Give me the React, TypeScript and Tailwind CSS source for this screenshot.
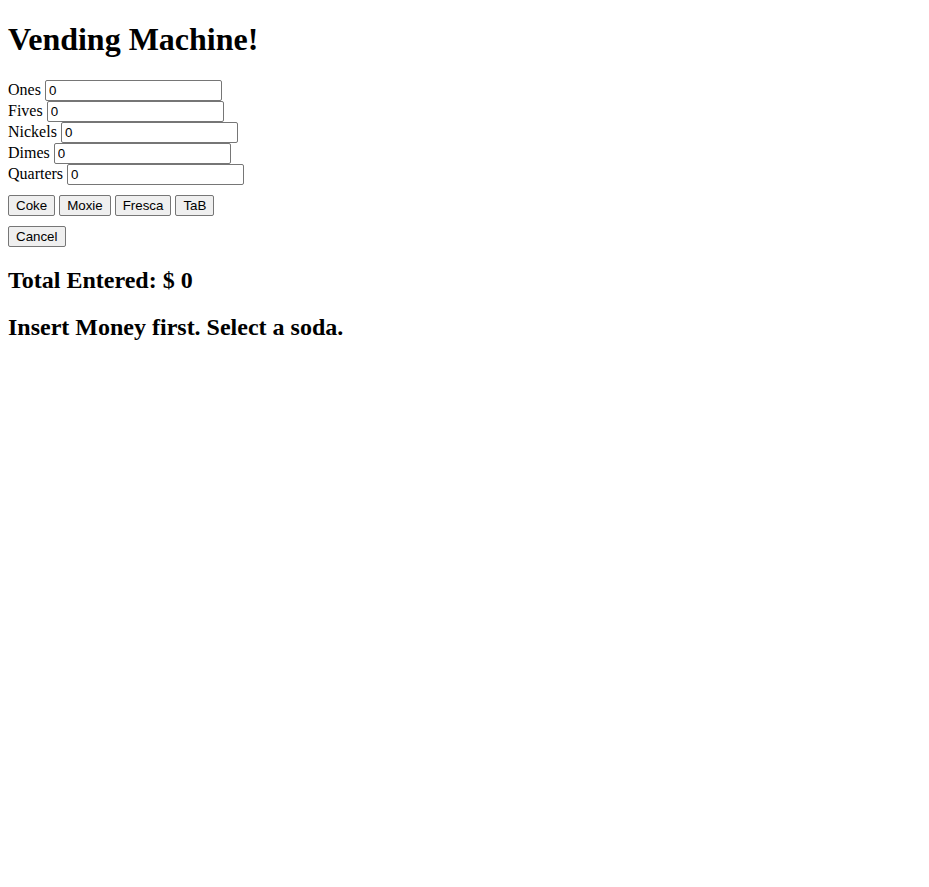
import React, { useState } from 'react'

const coins = ['Ones', 'Fives', 'Nickels', 'Dimes', 'Quarters']
const sodas = ['Coke', 'Moxie', 'Fresca', 'TaB']

const btn =
  "h-[21px] px-[7px] border border-[#767676] rounded-[2px] bg-[#efefef] text-black text-[13.333px] leading-[normal] font-['Liberation_Sans',Arial,sans-serif]"

const App = () => {
  const [amounts, setAmounts] = useState<Record<string, string>>({
    Ones: '0',
    Fives: '0',
    Nickels: '0',
    Dimes: '0',
    Quarters: '0'
  })

  return (
    <div className="min-h-screen bg-white px-2 pt-[21.44px] text-black text-[16px] leading-[normal] font-['Liberation_Serif','Times_New_Roman',serif]">
      <h1 className="mb-[21.44px] text-[32px] font-bold leading-[normal]">Vending Machine!</h1>
      <div>
        {coins.map((c) => (
          <div key={c}>
            {c}{' '}
            <input
              type="text"
              value={amounts[c]}
              onChange={(e) => setAmounts({ ...amounts, [c]: e.target.value })}
              className="h-[21px] w-[177px] border border-[#767676] rounded-[2px] bg-white pl-[3px] pr-[2px] align-baseline text-[13.333px] leading-[normal] text-black font-['Liberation_Sans',Arial,sans-serif] outline-none"
            />
          </div>
        ))}
      </div>
      <div className="mt-[10px] flex gap-[4px]">
        {sodas.map((s) => (
          <button key={s} className={btn}>{s}</button>
        ))}
      </div>
      <div className="mt-[10px] flex">
        <button className={btn}>Cancel</button>
      </div>
      <h2 className="my-[19.92px] text-[24px] font-bold leading-[normal]">Total Entered: $ 0</h2>
      <h2 className="my-[19.92px] text-[24px] font-bold leading-[normal]">Insert Money first. Select a soda.</h2>
    </div>
  )
}

export default App
